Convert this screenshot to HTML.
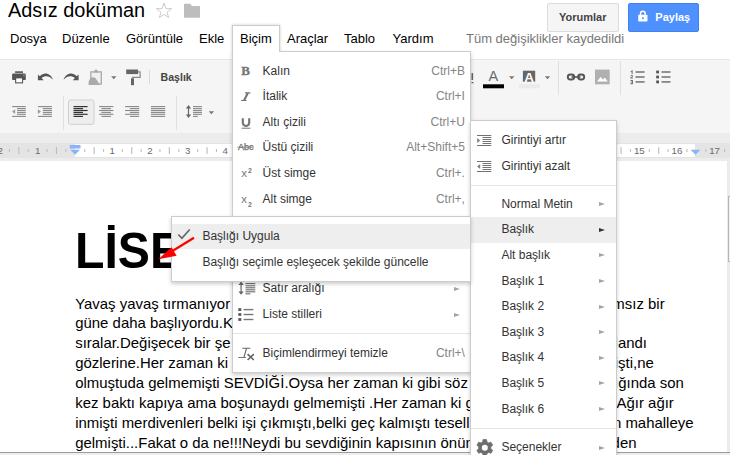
<!DOCTYPE html>
<html><head><meta charset="utf-8">
<style>
*{box-sizing:border-box;margin:0;padding:0}
html,body{width:730px;height:455px;overflow:hidden;background:#fff;font-family:"Liberation Sans",sans-serif;}
body{position:relative}
.abs{position:absolute}
svg{position:absolute;overflow:visible}
#title{left:8px;top:-2px;font-size:19.9px;color:#000;line-height:24px;white-space:nowrap}
.mi{position:absolute;top:30.7px;font-size:13px;color:#000;line-height:16px;white-space:nowrap}
#saved{position:absolute;top:30.7px;left:466px;font-size:13px;color:#777;line-height:16px;white-space:nowrap}
#bicimbtn{left:232px;top:25px;width:47.5px;height:29px;border:1px solid #ccc;border-bottom:none;background:#fff;box-shadow:0 0 3px rgba(0,0,0,.2)}
#toolbar{left:0;top:59.4px;width:730px;height:74.2px;background:#f5f5f5;border-top:1px solid #e7e7e7;border-bottom:1px solid #e0e0e0}
#rulerbg{left:0;top:133px;width:730px;height:28px;background:#ececec}
#ruler{left:0;top:143.4px;width:730px;height:14.8px;background:#e4e4e4}
#rulerw{left:75.4px;top:143.7px;width:619.8px;height:13.2px;background:#fff}
#page{left:0;top:160.6px;width:727px;height:295px;background:#fff}
#docbg{left:727px;top:160px;width:3px;height:295px;background:#ebebeb}
.menu{position:absolute;background:#fff;border:1px solid #ccc;box-shadow:0 2px 4px rgba(0,0,0,.2)}
.it{position:absolute;left:0;right:0;height:25.6px;font-size:12px;color:#333;line-height:25.6px;white-space:nowrap}
.it .l{position:absolute;left:29.6px}
.it .s{position:absolute;right:5.1px;color:#858585}
.it .ar{position:absolute;right:10.5px;top:10.6px;width:0;height:0;border-left:6.2px solid #a4a4a4;border-top:2.7px solid transparent;border-bottom:2.7px solid transparent}
.sep{position:absolute;left:0;right:0;height:1px;background:#e5e5e5}
.hl{background:#eee}
#h1{left:75.2px;top:222.9px;font-size:50.7px;transform:scaleX(0.951);transform-origin:0 0;font-weight:bold;line-height:56px;color:#000;white-space:nowrap}
.pl{position:absolute;left:75.2px;font-size:14.95px;line-height:20px;color:#000;white-space:nowrap}
.btn{position:absolute;top:3px;height:29px;border-radius:2px;font-size:11px;font-weight:bold;line-height:27px;text-align:center}
.rn{position:absolute;top:144.9px;font-size:9.7px;line-height:11px;color:#6a6a6a;width:20px;text-align:center}
.tb{position:absolute;background:#ddd;width:1px}
#m2 .it .l{left:30.4px}
#m2 .it .ar{right:11.5px}
</style></head><body>
<div id="title" class="abs">Adsız doküman</div>
<div class="mi" style="left:10px">Dosya</div>
<div class="mi" style="left:62px">Düzenle</div>
<div class="mi" style="left:126px">Görüntüle</div>
<div class="mi" style="left:199px">Ekle</div>
<div class="mi" style="left:287px">Araçlar</div>
<div class="mi" style="left:344px">Tablo</div>
<div class="mi" style="left:392.6px">Yardım</div>
<div id="saved">Tüm değişiklikler kaydedildi</div>
<div class="btn" style="left:546.9px;width:71.8px;background:#f5f5f5;border:1px solid #dcdcdc;color:#444">Yorumlar</div>
<div class="btn" style="left:627.5px;width:71.5px;background:#4d90fe;border:1px solid #3f83f2;color:#fff;padding-left:19px">Paylaş</div>

<svg width="730" height="40" style="left:0;top:0"><polygon points="164.0,3.2 165.9,8.6 171.6,8.7 167.0,12.2 168.7,17.7 164.0,14.4 159.3,17.7 161.0,12.2 156.4,8.7 162.1,8.6" fill="none" stroke="#ccc" stroke-width="1"/><path d="M184 3.8h6.2l1.8 2.2h8v11.8h-16z" fill="#bdbdbd"/><rect x="638.2" y="14.8" width="9.3" height="6.7" rx="0.8" fill="#fff"/><path d="M640.5 15v-1.3a2.35 2.35 0 0 1 4.7 0v1.3" fill="none" stroke="#fff" stroke-width="1.5"/><circle cx="642.85" cy="18.3" r="1" fill="#4d90fe"/></svg>
<div id="toolbar" class="abs"></div>
<div id="rulerbg" class="abs"></div>
<div id="ruler" class="abs"></div>
<div id="rulerw" class="abs"></div>
<div id="page" class="abs"></div>
<div id="docbg" class="abs"></div><div class="abs" style="left:0;top:452px;width:730px;height:1px;background:#9a9a9a"></div><div class="abs" style="left:0;top:453px;width:730px;height:2px;background:#eee"></div><div class="abs" style="left:728px;top:196px;width:3px;height:66px;border:1px solid #b5b5b5;border-right:none;background:#f1f1f1"></div>
<div class="rn" style="left:-9.9px">2</div>
<div class="rn" style="left:27.8px">1</div>
<div class="rn" style="left:102.3px">1</div>
<div class="rn" style="left:140.0px">2</div>
<div class="rn" style="left:177.6px">3</div>
<div class="rn" style="left:215.3px">4</div>
<div class="rn" style="left:252.9px">5</div>
<div class="rn" style="left:290.5px">6</div>
<div class="rn" style="left:328.2px">7</div>
<div class="rn" style="left:365.8px">8</div>
<div class="rn" style="left:403.5px">9</div>
<div class="rn" style="left:441.1px">10</div>
<div class="rn" style="left:478.7px">11</div>
<div class="rn" style="left:516.4px">12</div>
<div class="rn" style="left:554.0px">13</div>
<div class="rn" style="left:591.7px">14</div>
<div class="rn" style="left:629.3px">15</div>
<div class="rn" style="left:666.9px">16</div>
<div class="rn" style="left:704.6px">17</div>
<svg width="730" height="455" style="left:0;top:0"><rect x="8.9" y="149" width="1.1" height="3" fill="#c0c0c0"/><rect x="18.3" y="147.2" width="1.1" height="6.8" fill="#bbb"/><rect x="27.7" y="149" width="1.1" height="3" fill="#c0c0c0"/><rect x="46.5" y="149" width="1.1" height="3" fill="#c0c0c0"/><rect x="55.9" y="147.2" width="1.1" height="6.8" fill="#bbb"/><rect x="65.3" y="149" width="1.1" height="3" fill="#c0c0c0"/><rect x="84.2" y="149" width="1.1" height="3" fill="#c0c0c0"/><rect x="93.6" y="147.2" width="1.1" height="6.8" fill="#bbb"/><rect x="103.0" y="149" width="1.1" height="3" fill="#c0c0c0"/><rect x="121.8" y="149" width="1.1" height="3" fill="#c0c0c0"/><rect x="131.2" y="147.2" width="1.1" height="6.8" fill="#bbb"/><rect x="140.6" y="149" width="1.1" height="3" fill="#c0c0c0"/><rect x="159.4" y="149" width="1.1" height="3" fill="#c0c0c0"/><rect x="168.8" y="147.2" width="1.1" height="6.8" fill="#bbb"/><rect x="178.3" y="149" width="1.1" height="3" fill="#c0c0c0"/><rect x="197.1" y="149" width="1.1" height="3" fill="#c0c0c0"/><rect x="206.5" y="147.2" width="1.1" height="6.8" fill="#bbb"/><rect x="215.9" y="149" width="1.1" height="3" fill="#c0c0c0"/><rect x="234.7" y="149" width="1.1" height="3" fill="#c0c0c0"/><rect x="244.1" y="147.2" width="1.1" height="6.8" fill="#bbb"/><rect x="253.5" y="149" width="1.1" height="3" fill="#c0c0c0"/><rect x="272.4" y="149" width="1.1" height="3" fill="#c0c0c0"/><rect x="281.8" y="147.2" width="1.1" height="6.8" fill="#bbb"/><rect x="291.2" y="149" width="1.1" height="3" fill="#c0c0c0"/><rect x="310.0" y="149" width="1.1" height="3" fill="#c0c0c0"/><rect x="319.4" y="147.2" width="1.1" height="6.8" fill="#bbb"/><rect x="328.8" y="149" width="1.1" height="3" fill="#c0c0c0"/><rect x="347.6" y="149" width="1.1" height="3" fill="#c0c0c0"/><rect x="357.1" y="147.2" width="1.1" height="6.8" fill="#bbb"/><rect x="366.5" y="149" width="1.1" height="3" fill="#c0c0c0"/><rect x="385.3" y="149" width="1.1" height="3" fill="#c0c0c0"/><rect x="394.7" y="147.2" width="1.1" height="6.8" fill="#bbb"/><rect x="404.1" y="149" width="1.1" height="3" fill="#c0c0c0"/><rect x="422.9" y="149" width="1.1" height="3" fill="#c0c0c0"/><rect x="432.3" y="147.2" width="1.1" height="6.8" fill="#bbb"/><rect x="441.7" y="149" width="1.1" height="3" fill="#c0c0c0"/><rect x="460.6" y="149" width="1.1" height="3" fill="#c0c0c0"/><rect x="470.0" y="147.2" width="1.1" height="6.8" fill="#bbb"/><rect x="479.4" y="149" width="1.1" height="3" fill="#c0c0c0"/><rect x="498.2" y="149" width="1.1" height="3" fill="#c0c0c0"/><rect x="507.6" y="147.2" width="1.1" height="6.8" fill="#bbb"/><rect x="517.0" y="149" width="1.1" height="3" fill="#c0c0c0"/><rect x="535.8" y="149" width="1.1" height="3" fill="#c0c0c0"/><rect x="545.2" y="147.2" width="1.1" height="6.8" fill="#bbb"/><rect x="554.7" y="149" width="1.1" height="3" fill="#c0c0c0"/><rect x="573.5" y="149" width="1.1" height="3" fill="#c0c0c0"/><rect x="582.9" y="147.2" width="1.1" height="6.8" fill="#bbb"/><rect x="592.3" y="149" width="1.1" height="3" fill="#c0c0c0"/><rect x="611.1" y="149" width="1.1" height="3" fill="#c0c0c0"/><rect x="620.5" y="147.2" width="1.1" height="6.8" fill="#bbb"/><rect x="629.9" y="149" width="1.1" height="3" fill="#c0c0c0"/><rect x="648.8" y="149" width="1.1" height="3" fill="#c0c0c0"/><rect x="658.2" y="147.2" width="1.1" height="6.8" fill="#bbb"/><rect x="667.6" y="149" width="1.1" height="3" fill="#c0c0c0"/><rect x="686.4" y="149" width="1.1" height="3" fill="#c0c0c0"/><rect x="705.2" y="149" width="1.1" height="3" fill="#c0c0c0"/><rect x="724.0" y="149" width="1.1" height="3" fill="#c0c0c0"/><path d="M69.8 145h10.7v3.5h-10.7z M70.2 149.8h9.8l-4.9 5z" fill="#8ab4f8"/><path d="M690.6 149.8h9.8l-4.9 5z" fill="#8ab4f8"/></svg>
<svg id="tb" width="730" height="455" style="left:0;top:0"><rect x="149" y="70" width="1" height="14" fill="#d9d9d9"/>
<rect x="63" y="96" width="1" height="34" fill="#e0e0e0"/>
<rect x="176" y="96" width="1" height="34" fill="#e0e0e0"/>
<rect x="558" y="61" width="1" height="34" fill="#e0e0e0"/>
<rect x="620" y="61" width="1" height="34" fill="#e0e0e0"/>
<g fill="#555"><rect x="15.1" y="71.3" width="7.9" height="1.6"/><rect x="12.1" y="73.6" width="13.7" height="6.5" rx="1.2"/><rect x="15.1" y="77.3" width="8" height="6.1"/></g><rect x="16.2" y="78.4" width="5.8" height="3.9" fill="#fff"/><rect x="23.5" y="74.8" width="1" height="1" fill="#ccc"/>
<path d="M37.9 74.4v5.8h5.8l-2.1-2.1c3.2-2.8 7.8-2.4 11.3 1.6c-1.6-5.6-8.4-8.6-13.1-3.4z" fill="#555"/>
<path transform="translate(116.5 0) scale(-1 1)" d="M37.9 74.4v5.8h5.8l-2.1-2.1c3.2-2.8 7.8-2.4 11.3 1.6c-1.6-5.6-8.4-8.6-13.1-3.4z" fill="#555"/>
<g><rect x="90.8" y="71.9" width="10.5" height="12.1" fill="#f0f0f0" stroke="#aaa" stroke-width="1.3"/><path d="M93.3 72.5l1.6-2.6l1.1-0.5l1.1 0.5l1.6 2.6z" fill="#aaa"/><path d="M88.7 84.9C88 80.5 90.3 77.2 93.2 77.2C96.5 77.4 97.2 81.5 100 84.9z" fill="#aaa"/></g>
<path d="M111.1 76.2h5.4l-2.7 3.1z" fill="#777"/>
<g fill="#666"><rect x="126.2" y="69.5" width="11.9" height="4.6"/><rect x="131" y="78.3" width="3" height="6.9"/><path d="M138.1 71.3h2.6v6.6h-7.6v0.6h-1.2v-1.8h7.6v-4.2h-1.4z" fill="#888"/></g>
<text x="160.5" y="81" font-family="Liberation Sans" font-weight="bold" font-size="10.6" fill="#444">Başlık</text>
<rect x="12.1" y="106.05" width="13.7" height="1.1" fill="#888"/><rect x="17.0" y="108.05" width="8.8" height="1.1" fill="#888"/><rect x="17.0" y="109.95" width="8.8" height="1.1" fill="#888"/><rect x="17.0" y="111.85" width="8.8" height="1.1" fill="#888"/><rect x="17.0" y="113.75" width="8.8" height="1.1" fill="#888"/><rect x="12.1" y="115.85" width="13.7" height="1.1" fill="#888"/><path d="M15.1 109.2v4.8l-3-2.4z" fill="#999"/>
<rect x="37.9" y="106.05" width="14.0" height="1.1" fill="#888"/><rect x="42.8" y="108.05" width="9.1" height="1.1" fill="#888"/><rect x="42.8" y="109.95" width="9.1" height="1.1" fill="#888"/><rect x="42.8" y="111.85" width="9.1" height="1.1" fill="#888"/><rect x="42.8" y="113.75" width="9.1" height="1.1" fill="#888"/><rect x="37.9" y="115.85" width="14.0" height="1.1" fill="#888"/><path d="M37.9 109.2v4.8l3-2.4z" fill="#999"/>
<rect x="68.5" y="100" width="25.5" height="24.4" rx="2" fill="#eee" stroke="#cfcfcf" stroke-width="1"/>
<rect x="73.5" y="106.00" width="14.1" height="1.2" fill="#333"/><rect x="73.5" y="108.00" width="9.5" height="1.2" fill="#333"/><rect x="73.5" y="109.90" width="14.1" height="1.2" fill="#333"/><rect x="73.5" y="111.80" width="9.5" height="1.2" fill="#333"/><rect x="73.5" y="113.70" width="14.1" height="1.2" fill="#333"/><rect x="73.5" y="115.80" width="9.5" height="1.2" fill="#333"/>
<rect x="99.1" y="106.05" width="14.3" height="1.1" fill="#888"/><rect x="101.4" y="108.05" width="9.6" height="1.1" fill="#888"/><rect x="99.1" y="109.95" width="14.3" height="1.1" fill="#888"/><rect x="101.4" y="111.85" width="9.6" height="1.1" fill="#888"/><rect x="99.1" y="113.75" width="14.3" height="1.1" fill="#888"/><rect x="101.4" y="115.85" width="9.6" height="1.1" fill="#888"/>
<rect x="125.1" y="106.05" width="14.1" height="1.1" fill="#888"/><rect x="129.9" y="108.05" width="9.3" height="1.1" fill="#888"/><rect x="125.1" y="109.95" width="14.1" height="1.1" fill="#888"/><rect x="129.9" y="111.85" width="9.3" height="1.1" fill="#888"/><rect x="125.1" y="113.75" width="14.1" height="1.1" fill="#888"/><rect x="129.9" y="115.85" width="9.3" height="1.1" fill="#888"/>
<rect x="150.9" y="106.05" width="14.3" height="1.1" fill="#888"/><rect x="150.9" y="108.05" width="14.3" height="1.1" fill="#888"/><rect x="150.9" y="109.95" width="14.3" height="1.1" fill="#888"/><rect x="150.9" y="111.85" width="14.3" height="1.1" fill="#888"/><rect x="150.9" y="113.75" width="14.3" height="1.1" fill="#888"/><rect x="150.9" y="115.85" width="14.3" height="1.1" fill="#888"/>
<g fill="#666"><path d="M188.5 105l2.6 3.5h-5.2z"/><path d="M188.5 118l2.6-3.5h-5.2z"/><rect x="187.9" y="107.5" width="1.2" height="8"/></g>
<rect x="193.0" y="106.05" width="8.9" height="1.1" fill="#888"/><rect x="193.0" y="108.05" width="8.9" height="1.1" fill="#888"/><rect x="193.0" y="109.95" width="8.9" height="1.1" fill="#888"/><rect x="193.0" y="111.85" width="8.9" height="1.1" fill="#888"/><rect x="193.0" y="113.75" width="8.9" height="1.1" fill="#888"/><rect x="193.0" y="115.85" width="4.8" height="1.1" fill="#888"/>
<path d="M208.7 111.2h5.4l-2.7 3.1z" fill="#777"/><rect x="471.5" y="73" width="1.6" height="7" fill="#666"/><rect x="471.5" y="82" width="2" height="1.2" fill="#666"/>
<text x="488.4" y="81.4" font-family="Liberation Sans" font-size="14.5" fill="#6a6a6a">A</text><g fill="#666"><path d="M631.6 70.2h1v3.8h-1z M630.7 71h1v0.8h-1z"/><path d="M630.5 75.2h2.4v1.6h-1.4v0.8h1.4v0.9h-2.4v-1.7h1.4v-0.7h-1.4z"/><path d="M630.5 80h2.4v4.2h-2.4v-0.9h1.4v-0.8h-1.2v-0.8h1.2v-0.8h-1.4z"/></g>
<rect x="483" y="84.3" width="21" height="4" fill="#000"/>
<path d="M509 76.2h5.4l-2.7 3.1z" fill="#777"/>
<rect x="522.9" y="70.7" width="12.3" height="11" fill="#666"/><text x="524.3" y="81.5" font-family="Liberation Sans" font-size="13.5" font-weight="bold" fill="#fff">A</text>
<rect x="519" y="84.3" width="21" height="4" fill="#ebebeb"/>
<path d="M544.8 76.2h5.4l-2.7 3.1z" fill="#777"/>
<g fill="none" stroke="#555" stroke-width="1.9"><rect x="567.8" y="74.5" width="6.4" height="5" rx="2.5"/><rect x="578.1" y="74.5" width="6.1" height="5" rx="2.5"/></g><rect x="571.5" y="76.2" width="9" height="1.6" fill="#555"/>
<rect x="595" y="69.6" width="14.7" height="14.7" fill="#b0b0b0"/><path d="M597 81.5l3.6-4.6l2.4 2.6l1.9-1.9l2.8 3.9z" fill="#fff"/>
<rect x="635.5" y="71.1" width="9.1" height="1.8" fill="#888"/>
<rect x="661.5" y="71.1" width="9" height="1.8" fill="#888"/>
<rect x="656.2" y="70.6" width="2.8" height="2.8" fill="#555"/>

<rect x="635.5" y="76.1" width="9.1" height="1.8" fill="#888"/>
<rect x="661.5" y="76.1" width="9" height="1.8" fill="#888"/>
<rect x="656.2" y="75.6" width="2.8" height="2.8" fill="#555"/>

<rect x="635.5" y="81.0" width="9.1" height="1.8" fill="#888"/>
<rect x="661.5" y="81.0" width="9" height="1.8" fill="#888"/>
<rect x="656.2" y="80.5" width="2.8" height="2.8" fill="#555"/>
</svg>

<div id="h1" class="abs">LİSE</div>
<div class="pl" id="L0" style="top:293.90px">Yavaş yavaş tırmanıyor</div>
<div class="pl" id="R0" style="top:293.90px;left:auto;right:65.4px">umsız bir</div>
<div class="pl" id="L1" style="top:312.90px">güne daha başlıyordu.K</div>
<div class="pl" id="L2" style="top:332.90px">sıralar.Değişecek bir şe</div>
<div class="pl" id="R2" style="top:332.90px;left:auto;right:83.0px">canlandı</div>
<div class="pl" id="L3" style="top:352.90px">gözlerine.Her zaman ki </div>
<div class="pl" id="R3" style="top:352.90px;left:auto;right:76.2px">mişti,ne</div>
<div class="pl" id="L4" style="top:372.90px">olmuştuda gelmemişti SEVDİĞİ.Oysa her zaman ki gibi söz </div>
<div class="pl" id="R4" style="top:372.90px;left:auto;right:46.2px">baktığında son</div>
<div class="pl" id="L5" style="top:392.90px">kez baktı kapıya ama boşunaydı gelmemişti .Her zaman ki gibi</div>
<div class="pl" id="R5" style="top:392.90px;left:auto;right:56.2px">ti.Ağır ağır</div>
<div class="pl" id="L6" style="top:412.90px">inmişti merdivenleri belki işi çıkmıştı,belki geç kalmıştı teselli</div>
<div class="pl" id="R6" style="top:412.90px;left:auto;right:36.5px">bütün mahalleye</div>
<div class="pl" id="L7" style="top:432.90px">gelmişti...Fakat o da ne!!!Neydi bu sevdiğinin kapısının önün</div>
<div class="pl" id="R7" style="top:432.90px;left:auto;right:93.5px">neden</div>

<!-- Bicim menu -->
<div id="bicimbtn" class="abs"></div>
<div class="menu" id="m1" style="left:232px;top:51px;width:239px;height:321.6px">
 <div class="abs" style="left:0px;top:-5px;width:45.5px;height:6px;background:#fff"></div>
 <div class="it" style="top:6.6px"><span class="l">Kalın</span><span class="s">Ctrl+B</span></div>
 <div class="it" style="top:32.2px"><span class="l">İtalik</span><span class="s">Ctrl+I</span></div>
 <div class="it" style="top:57.8px"><span class="l">Altı çizili</span><span class="s">Ctrl+U</span></div>
 <div class="it" style="top:83.4px"><span class="l">Üstü çizili</span><span class="s">Alt+Shift+5</span></div>
 <div class="it" style="top:109.0px"><span class="l">Üst simge</span><span class="s">Ctrl+.</span></div>
 <div class="it" style="top:134.6px"><span class="l">Alt simge</span><span class="s">Ctrl+,</span></div>
 <div class="sep" style="top:166.6px"></div>
 <div class="it hl" style="top:173.2px"><span class="l">Paragraf stilleri</span><span class="ar"></span></div>
 <div class="it" style="top:198.8px"><span class="l">Hizala</span><span class="ar"></span></div>
 <div class="it" style="top:224.4px"><span class="l">Satır aralığı</span><span class="ar"></span></div>
 <div class="it" style="top:250.0px"><span class="l">Liste stilleri</span><span class="ar"></span></div>
 <div class="sep" style="top:281px"></div>
 <div class="it" style="top:288.6px"><span class="l">Biçimlendirmeyi temizle</span><span class="s">Ctrl+\</span></div>
 <svg width="240" height="320" style="left:0;top:0"><g transform="translate(-233 -52)"><text x="241.2" y="75.3" font-family="Liberation Serif" font-weight="bold" font-size="13" fill="#777" stroke="#777" stroke-width="0.35">B</text><path d="M245 92.3h5.4v1.1h-5.4z M241 99.9h5.6v1.1h-5.6z M246.9 92.5h2.4l-4.2 8.3h-2.4z" fill="#777"/><path d="M242.8 118.2v4.6a3.2 3.2 0 0 0 6.4 0v-4.6" fill="none" stroke="#777" stroke-width="2.2"/><rect x="241.6" y="127.7" width="8.8" height="1" fill="#777"/><text x="238" y="150.1" font-family="Liberation Sans" font-size="8.6" fill="#707070" stroke="#707070" stroke-width="0.25" textLength="15.6" lengthAdjust="spacingAndGlyphs">Abc</text><rect x="237.4" y="146.7" width="16.4" height="0.9" fill="#777"/><text x="241.3" y="177" font-family="Liberation Sans" font-size="11.5" fill="#777">x</text><text x="247.9" y="173.4" font-family="Liberation Sans" font-size="6.8" font-weight="bold" fill="#777">2</text><text x="241.3" y="202.8" font-family="Liberation Sans" font-size="11.5" fill="#777">x</text><text x="247.9" y="206.8" font-family="Liberation Sans" font-size="6.8" font-weight="bold" fill="#777">2</text><g fill="#666"><path d="M241.1 281.5l2.7 3.4h-5.4z"/><path d="M241.1 294.8l2.7-3.4h-5.4z"/><rect x="240.5" y="284" width="1.2" height="8.5"/></g><rect x="245.5" y="283.05" width="9.8" height="1.1" fill="#6a6a6a"/><rect x="245.5" y="285.25" width="9.8" height="1.1" fill="#6a6a6a"/><rect x="245.5" y="287.25" width="9.8" height="1.1" fill="#6a6a6a"/><rect x="245.5" y="289.25" width="9.8" height="1.1" fill="#6a6a6a"/><rect x="245.5" y="291.25" width="9.8" height="1.1" fill="#6a6a6a"/><rect x="245.5" y="293.25" width="4.8" height="1.1" fill="#6a6a6a"/><rect x="238.3" y="308.2" width="3" height="2.8" fill="#5a5a5a"/><rect x="243.6" y="308.9" width="9.8" height="1.4" fill="#777"/><rect x="238.3" y="313.1" width="3" height="2.8" fill="#5a5a5a"/><rect x="243.6" y="313.8" width="9.8" height="1.4" fill="#777"/><rect x="238.3" y="318.1" width="3" height="2.8" fill="#5a5a5a"/><rect x="243.6" y="318.8" width="9.8" height="1.4" fill="#777"/><path d="M242.3 348.2h8M246.6 348.2l-2.6 9" stroke="#666" stroke-width="1.15" fill="none"/><rect x="238.3" y="357" width="7.6" height="1" fill="#777"/><path d="M247.6 354.2l6.2 5.8M253.8 354.2l-6.2 5.8" stroke="#666" stroke-width="1.7" fill="none"/></g></svg>
</div>
<div class="mi" style="left:240px">Biçim</div>

<!-- paragraph styles submenu -->
<div class="menu" id="m2" style="left:470px;top:120px;width:147px;height:345px">
 <div class="it" style="top:6.5px"><span class="l">Girintiyi artır</span></div>
 <div class="it" style="top:32.8px"><span class="l">Girintiyi azalt</span></div>
 <div class="sep" style="top:64px"></div>
 <div class="it" style="top:70.7px"><span class="l">Normal Metin</span><span class="ar"></span></div>
 <div class="it hl" style="top:96.3px"><span class="l">Başlık</span><span class="ar" style="border-left-color:#333"></span></div>
 <div class="it" style="top:121.9px"><span class="l">Alt başlık</span><span class="ar"></span></div>
 <div class="it" style="top:147.5px"><span class="l">Başlık 1</span><span class="ar"></span></div>
 <div class="it" style="top:173.1px"><span class="l">Başlık 2</span><span class="ar"></span></div>
 <div class="it" style="top:198.7px"><span class="l">Başlık 3</span><span class="ar"></span></div>
 <div class="it" style="top:224.3px"><span class="l">Başlık 4</span><span class="ar"></span></div>
 <div class="it" style="top:249.9px"><span class="l">Başlık 5</span><span class="ar"></span></div>
 <div class="it" style="top:275.5px"><span class="l">Başlık 6</span><span class="ar"></span></div>
 <div class="sep" style="top:307px"></div>
 <div class="it" style="top:314px"><span class="l">Seçenekler</span><span class="ar"></span></div>
 <svg width="146" height="345" style="left:0;top:0"><g transform="translate(-471 -121)"><rect x="477" y="135.0" width="14.3" height="1" fill="#727272"/><rect x="482.5" y="137.0" width="8.8" height="1" fill="#727272"/><rect x="482.5" y="139.0" width="8.8" height="1" fill="#727272"/><rect x="482.5" y="141.0" width="8.8" height="1" fill="#727272"/><rect x="482.5" y="143.0" width="8.8" height="1" fill="#727272"/><rect x="477" y="145.0" width="14.3" height="1" fill="#727272"/><path d="M477.1 137.9v5.2l3.1-2.6z" fill="#808080"/><rect x="477" y="161.0" width="14.3" height="1" fill="#727272"/><rect x="482.5" y="163.0" width="8.8" height="1" fill="#727272"/><rect x="482.5" y="165.0" width="8.8" height="1" fill="#727272"/><rect x="482.5" y="167.0" width="8.8" height="1" fill="#727272"/><rect x="482.5" y="169.0" width="8.8" height="1" fill="#727272"/><rect x="477" y="171.0" width="14.3" height="1" fill="#727272"/><path d="M480.2 163.9v5.2l-3.1-2.6z" fill="#808080"/><polygon points="483.07,439.58 486.53,439.58 486.95,441.99 488.67,442.98 490.96,442.14 492.70,445.14 490.82,446.71 490.82,448.69 492.70,450.26 490.96,453.26 488.67,452.42 486.95,453.41 486.53,455.82 483.07,455.82 482.65,453.41 480.93,452.42 478.64,453.26 476.90,450.26 478.78,448.69 478.78,446.71 476.90,445.14 478.64,442.14 480.93,442.98 482.65,441.99" fill="#6e6e6e" stroke="#6e6e6e" stroke-width="0.8" stroke-linejoin="round"/><circle cx="484.8" cy="447.7" r="3" fill="#fff"/></g></svg>
</div>

<!-- sub-submenu -->
<div class="menu" id="m3" style="left:171px;top:216.4px;width:300px;height:65.6px">
 <div class="it hl" style="top:6.4px;height:25.4px"><span class="l" style="left:30.4px;top:0.5px">Başlığı Uygula</span></div>
 <div class="it" style="top:32.8px"><span class="l" style="left:30.4px">Başlığı seçimle eşleşecek şekilde güncelle</span></div>
 <svg width="300" height="63" style="left:0;top:0"><g transform="translate(-172.5 -218.1)"><path d="M178.8 235.6l3.6 3.8l7.8-8.8" fill="none" stroke="#666" stroke-width="1.7"/></g></svg>
</div>
<svg width="730" height="455" style="left:0;top:0"><path d="M194 237.8L170 252.5" stroke="#f00" stroke-width="2.2" fill="none"/><path d="M158.3 259.2L171.6 247.2L176.6 255.8z" fill="#f00"/></svg>
</body></html>
